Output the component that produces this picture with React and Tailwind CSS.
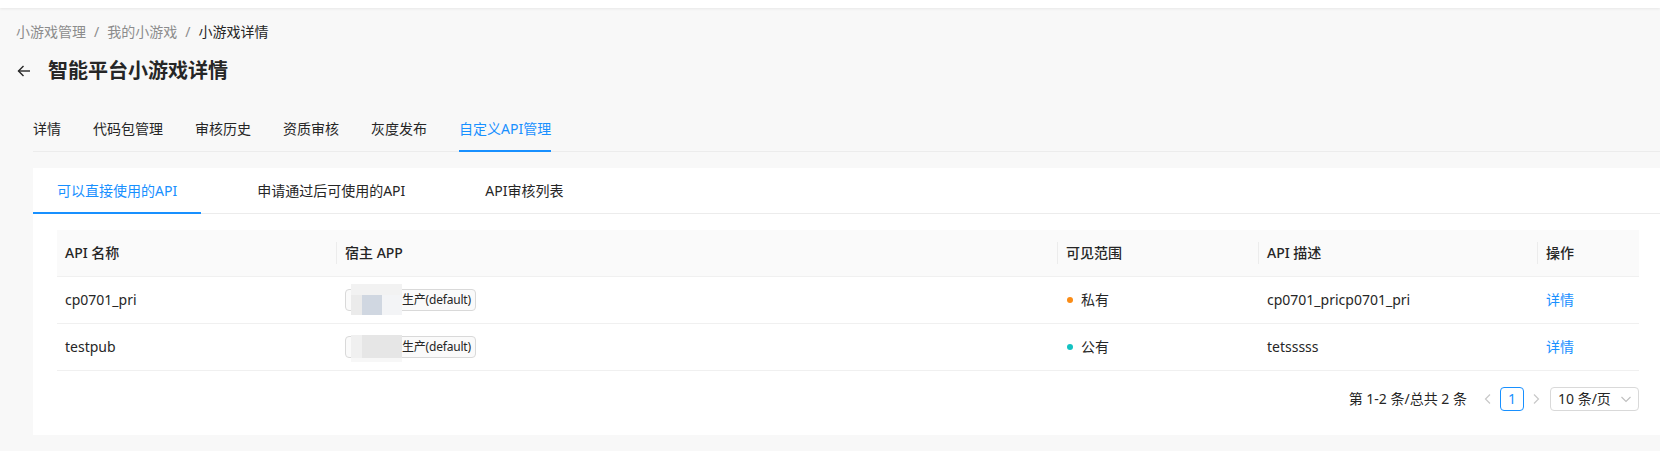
import React from "react";

const mainTabs = ["详情", "代码包管理", "审核历史", "资质审核", "灰度发布", "自定义API管理"];
const subTabs = ["可以直接使用的API", "申请通过后可使用的API", "API审核列表"];

const rows = [
  { name: "cp0701_pri", scope: "私有", dot: "bg-[#fa8c16]", desc: "cp0701_pricp0701_pri", blur: "a" },
  { name: "testpub", scope: "公有", dot: "bg-[#13c2c2]", desc: "tetsssss", blur: "b" },
];

var HostTag = ({ blur }) => {
  return (
    <span className="relative inline-flex h-[22px] items-center rounded-sm border border-[#d9d9d9] bg-[#fafafa] pl-[56px] pr-[4px] align-top text-xs leading-5 tracking-[-0.2px] text-[#262626]">
      生产(default)
      {/* redacted part */}
      {blur === "a" ? (
        <span className="absolute left-[5px] top-[-6px] flex h-[31px] w-[51px] flex-col">
          <span className="h-[11px] w-full bg-[#f2f2f2]" />
          <span className="flex h-[20px] w-full">
            <span className="w-[11px] bg-[#ebebeb]" />
            <span className="w-[20px] bg-[#d0d7e1]" />
            <span className="w-[20px] bg-[#f3f4f6]" />
          </span>
        </span>
      ) : (
        <span className="absolute left-[5px] top-[-2px] flex h-[27px] w-[51px] flex-col">
          <span className="flex h-[23px] w-full">
            <span className="w-[11px] bg-[#f0f0f0]" />
            <span className="w-[40px] bg-[#e6e6e6]" />
          </span>
          <span className="h-[4px] w-full bg-[#f7f7f7]" />
        </span>
      )}
    </span>
  );
};

var App = () => {
  return (
    <div className="min-h-screen overflow-hidden bg-[#f8f8f8] font-['Noto_Sans','Noto_Sans_CJK_SC',sans-serif] text-sm text-[#262626]">
      {/* top bar */}
      <div className="relative z-10 h-2 bg-white shadow-[0_1px_3px_rgba(0,0,0,0.07)]" />

      {/* page header */}
      <div className="px-4 pt-[13px]">
        <div className="flex items-center leading-[22px] text-[#8c8c8c]">
          <span>小游戏管理</span>
          <span className="mx-2">/</span>
          <span>我的小游戏</span>
          <span className="mx-2">/</span>
          <span className="text-[#262626]">小游戏详情</span>
        </div>
        <div className="mt-[14px] flex h-7 items-center">
          <svg className="mr-4" width="16" height="16" viewBox="0 0 16 16" fill="none" stroke="#262626" strokeWidth="1.4">
            <path d="M14 8H2.5" />
            <path d="M7.5 3 2.5 8l5 5" />
          </svg>
          <h1 className="text-xl font-semibold leading-7 text-[#262626]">智能平台小游戏详情</h1>
        </div>
      </div>

      {/* main tabs */}
      <div className="mt-[21px] ml-[33px] flex border-b border-[#ececec]">
        {mainTabs.map((t, i) => (
          <div
            key={t}
            className={
              "relative pt-3 pb-[11px] leading-[22px] " +
              (i > 0 ? "ml-8 " : "") +
              (i === mainTabs.length - 1 ? "text-[#1890ff]" : "text-[#262626]")
            }
          >
            {t}
            {i === mainTabs.length - 1 && <span className="absolute bottom-[-1px] left-0 h-[2px] w-full bg-[#1890ff]" />}
          </div>
        ))}
      </div>

      {/* card */}
      <div className="mt-4 ml-[33px] bg-white pb-6">
        <div className="flex border-b border-[#ececec]">
          {subTabs.map((t, i) => (
            <div
              key={t}
              className={
                "relative px-6 pt-3 pb-[11px] leading-[22px] " +
                (i > 0 ? "ml-8 " : "") +
                (i === 0 ? "text-[#1890ff]" : "text-[#262626]")
              }
            >
              {t}
              {i === 0 && <span className="absolute bottom-[-1px] left-0 h-[2px] w-full bg-[#1890ff]" />}
            </div>
          ))}
        </div>

        <div className="pl-6 pr-[21px] pt-4">
          <table className="w-full table-fixed border-collapse">
            <colgroup>
              <col className="w-[280px]" />
              <col className="w-[721px]" />
              <col className="w-[201px]" />
              <col className="w-[279px]" />
              <col className="w-[101px]" />
            </colgroup>
            <thead>
              <tr className="bg-[#fafafa]">
                {["API 名称", "宿主 APP", "可见范围", "API 描述", "操作"].map((h, i) => (
                  <th key={h} className="relative border-b border-[#f0f0f0] px-2 py-3 text-left font-medium leading-[22px] text-[#262626]">
                    {h}
                    {i < 4 && <span className="absolute right-0 top-1/2 h-[22px] w-px -translate-y-1/2 bg-[#ececec]" />}
                  </th>
                ))}
              </tr>
            </thead>
            <tbody>
              {rows.map((r) => (
                <tr key={r.name}>
                  <td className="border-b border-[#f0f0f0] px-2 py-3 leading-[22px]">{r.name}</td>
                  <td className="border-b border-[#f0f0f0] px-2 py-3 leading-[22px]">
                    <HostTag blur={r.blur} />
                  </td>
                  <td className="border-b border-[#f0f0f0] px-2 py-3 leading-[22px]">
                    <span className="flex items-center">
                      <span className={"ml-px mr-2 h-[6px] w-[6px] rounded-full " + r.dot} />
                      {r.scope}
                    </span>
                  </td>
                  <td className="border-b border-[#f0f0f0] px-2 py-3 leading-[22px]">{r.desc}</td>
                  <td className="border-b border-[#f0f0f0] px-2 py-3 leading-[22px] text-[#1890ff]">详情</td>
                </tr>
              ))}
            </tbody>
          </table>

          {/* pagination */}
          <div className="mt-4 flex h-6 items-center justify-end">
            <span className="mr-[9px] leading-6">第 1-2 条/总共 2 条</span>
            <span className="flex h-6 w-6 items-center justify-center">
              <svg width="12" height="12" viewBox="0 0 12 12" fill="none" stroke="#c8c8c8" strokeWidth="1.2">
                <path d="M8 1.5 3.5 6 8 10.5" />
              </svg>
            </span>
            <span className="flex h-6 w-6 items-center justify-center rounded-sm border border-[#1890ff] text-[#1890ff]">1</span>
            <span className="flex h-6 w-6 items-center justify-center">
              <svg width="12" height="12" viewBox="0 0 12 12" fill="none" stroke="#c8c8c8" strokeWidth="1.2">
                <path d="M4 1.5 8.5 6 4 10.5" />
              </svg>
            </span>
            <span className="ml-[2px] flex h-6 w-[89px] items-center justify-between rounded-sm border border-[#d9d9d9] pl-[7px] pr-[6px]">
              <span>10 条/页</span>
              <svg width="12" height="12" viewBox="0 0 12 12" fill="none" stroke="#bfbfbf" strokeWidth="1.1">
                <path d="M1.5 4 6 8.5 10.5 4" />
              </svg>
            </span>
          </div>
        </div>
      </div>
    </div>
  );
};

export default App;
